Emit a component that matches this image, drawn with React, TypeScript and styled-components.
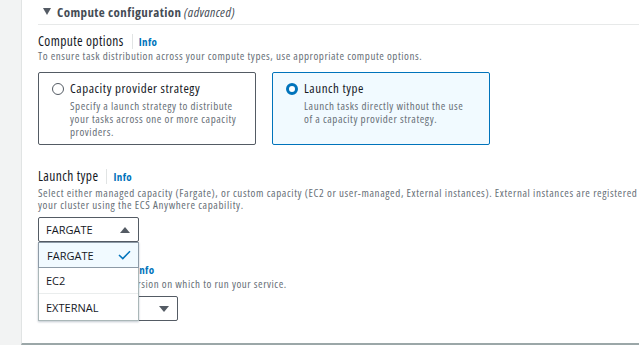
import React from "react";
import styled, { createGlobalStyle } from "styled-components";

const Global = createGlobalStyle`
  html, body { margin: 0; padding: 0; background: #f2f3f3; }
  body { font-family: "Open Sans", "Noto Sans", Arial, sans-serif; color: #16191f; font-stretch: condensed; }
  * { box-sizing: border-box; }
`;

const Page = styled.div`
  width: 639px;
  height: 345px;
  display: flex;
  overflow: hidden;
  background: #f2f3f3;
`;

const Gutter = styled.div`
  width: 21px;
  flex: none;
`;

const Card = styled.div`
  flex: 1;
  background: #fff;
  border-left: 1px solid #e1e4e4;
  border-bottom: 2px solid #9ba7a8;
  padding: 0 0 0 16px;
  height: 345px;
`;

const Header = styled.div`
  display: flex;
  align-items: center;
  gap: 6px;
  height: 25px;
  padding: 0 0 1px 5px;
  border-bottom: 1px solid #e7e9e9;
  font-size: 13px;
  letter-spacing: 0.4px;
  font-weight: 700;
  color: #444c55;
`;

const Caret = styled.span`
  width: 0;
  height: 0;
  border-left: 4px solid transparent;
  border-right: 4px solid transparent;
  border-top: 7px solid #545b64;
`;

const Adv = styled.span`
  font-style: italic;
  font-weight: 400;
`;

const Body = styled.div`
  padding-top: 7px;
`;

const LabelRow = styled.div`
  display: flex;
  align-items: center;
  height: 18px;
  font-size: 13.5px;
  letter-spacing: 0.4px;
  color: #16191f;
`;

const Sep = styled.span`
  width: 1px;
  height: 15px;
  background: #e1e4e4;
  margin: 0 6px 0 8px;
`;

const Info = styled.span`
  color: #0073bb;
  font-size: 11px;
  letter-spacing: 0.4px;
  font-weight: 700;
`;

const Desc = styled.div<{ $spacing?: number }>`
  font-size: 11px;
  letter-spacing: ${(p) => p.$spacing ?? 0.55}px;
  color: #687078;
  line-height: 12px;
  white-space: nowrap;
`;

const Tiles = styled.div`
  display: flex;
  gap: 16px;
  margin-top: 10px;
`;

const Tile = styled.div<{ $selected?: boolean }>`
  width: 218px;
  height: 73px;
  border: 1px solid ${(p) => (p.$selected ? "#0073bb" : "#545b64")};
  background: ${(p) => (p.$selected ? "#f1faff" : "#fff")};
  border-radius: 2px;
  padding: 7px 17px 0 13px;
  display: flex;
  gap: 6px;
`;

const Radio = styled.span<{ $checked?: boolean }>`
  flex: none;
  width: 12px;
  height: 12px;
  margin-top: 3px;
  border-radius: 50%;
  border: ${(p) => (p.$checked ? "3.5px solid #0073bb" : "1px solid #545b64")};
  background: #fff;
`;

const TileText = styled.div`
  display: flex;
  flex-direction: column;
`;

const TileTitle = styled.div`
  font-size: 13px;
  letter-spacing: 0.55px;
  line-height: 17px;
  color: #16191f;
`;

const TileDesc = styled.div`
  font-size: 11px;
  letter-spacing: 0.55px;
  line-height: 13px;
  color: #687078;
  margin-top: 2px;
`;

const Section = styled.div`
  margin-top: 22px;
`;

const DescBlock = styled(Desc)`
  margin-top: 2px;
`;

const SelectWrap = styled.div`
  position: relative;
  margin-top: 6px;
  width: 101px;
`;

const SelectBox = styled.div<{ $w?: number }>`
  width: ${(p) => p.$w ?? 101}px;
  height: 25px;
  border: 1px solid #545b64;
  border-radius: 2px;
  background: #fff;
  display: flex;
  align-items: center;
  justify-content: space-between;
  padding: 0 8px 0 7px;
  font-size: 11px;
  font-stretch: normal;
  color: #16191f;
`;

const Tri = styled.span<{ $up?: boolean }>`
  width: 0;
  height: 0;
  border-left: 5px solid transparent;
  border-right: 5px solid transparent;
  ${(p) => (p.$up ? "border-bottom: 6px solid #545b64;" : "border-top: 6px solid #545b64;")}
`;

const Menu = styled.div`
  position: absolute;
  left: 0;
  top: 25px;
  width: 101px;
  background: #fff;
  border: 1px solid #aab7b8;
  border-top: none;
  box-shadow: 0 1px 2px rgba(0, 31, 63, 0.25);
  z-index: 2;
`;

const Option = styled.div<{ $selected?: boolean }>`
  height: ${(p) => (p.$selected ? 26 : 26)}px;
  display: flex;
  align-items: center;
  justify-content: space-between;
  padding: 0 7px 0 ${(p) => (p.$selected ? "8px" : "7px")};
  font-size: 11px;
  font-stretch: normal;
  color: #16191f;
  background: ${(p) => (p.$selected ? "#f1faff" : "#fff")};
  border: ${(p) => (p.$selected ? "1px solid #8d9aa6" : "none")};
  border-bottom: 1px solid ${(p) => (p.$selected ? "#8d9aa6" : "#eaeded")};
  margin: ${(p) => (p.$selected ? "0 -1px" : "0")};
  &:last-child { border-bottom: none; }
`;

const Hidden = styled.div`
  margin-top: 18px;
`;

const Check = () => (
  <svg width="13" height="10" viewBox="0 0 13 10">
    <path d="M1 5 L4.8 8.6 L12 1.2" fill="none" stroke="#0073bb" strokeWidth="1.5" />
  </svg>
);

export default function App() {
  return (
    <>
      <Global />
      <Page>
        <Gutter />
        <Card>
          <Header>
            <Caret />
            <span>
              Compute configuration <Adv>(advanced)</Adv>
            </span>
          </Header>
          <Body>
            <LabelRow>
              Compute options
              <Sep />
              <Info>Info</Info>
            </LabelRow>
            <Desc>To ensure task distribution across your compute types, use appropriate compute options.</Desc>
            <Tiles>
              <Tile>
                <Radio />
                <TileText>
                  <TileTitle>Capacity provider strategy</TileTitle>
                  <TileDesc>
                    Specify a launch strategy to distribute your tasks across one or more capacity providers.
                  </TileDesc>
                </TileText>
              </Tile>
              <Tile $selected>
                <Radio $checked />
                <TileText>
                  <TileTitle>Launch type</TileTitle>
                  <TileDesc>Launch tasks directly without the use of a capacity provider strategy.</TileDesc>
                </TileText>
              </Tile>
            </Tiles>
            <Section>
              <LabelRow>
                Launch type
                <Sep />
                <Info>Info</Info>
              </LabelRow>
              <DescBlock $spacing={0.6}>
                Select either managed capacity (Fargate), or custom capacity (EC2 or user-managed, External instances). External instances are registered to
                <br />
                your cluster using the ECS Anywhere capability.
              </DescBlock>
              <SelectWrap>
                <SelectBox>
                  FARGATE
                  <Tri $up />
                </SelectBox>
                <Menu>
                  <Option $selected>
                    FARGATE
                    <Check />
                  </Option>
                  <Option>EC2</Option>
                  <Option>EXTERNAL</Option>
                </Menu>
              </SelectWrap>
              <Hidden>
                <LabelRow>
                  Platform version
                  <Sep />
                  <Info>Info</Info>
                </LabelRow>
                <Desc>Specify the platform version on which to run your service.</Desc>
                <SelectWrap>
                  <SelectBox $w={140}>
                    LATEST
                    <Tri />
                  </SelectBox>
                </SelectWrap>
              </Hidden>
            </Section>
          </Body>
        </Card>
      </Page>
    </>
  );
}
